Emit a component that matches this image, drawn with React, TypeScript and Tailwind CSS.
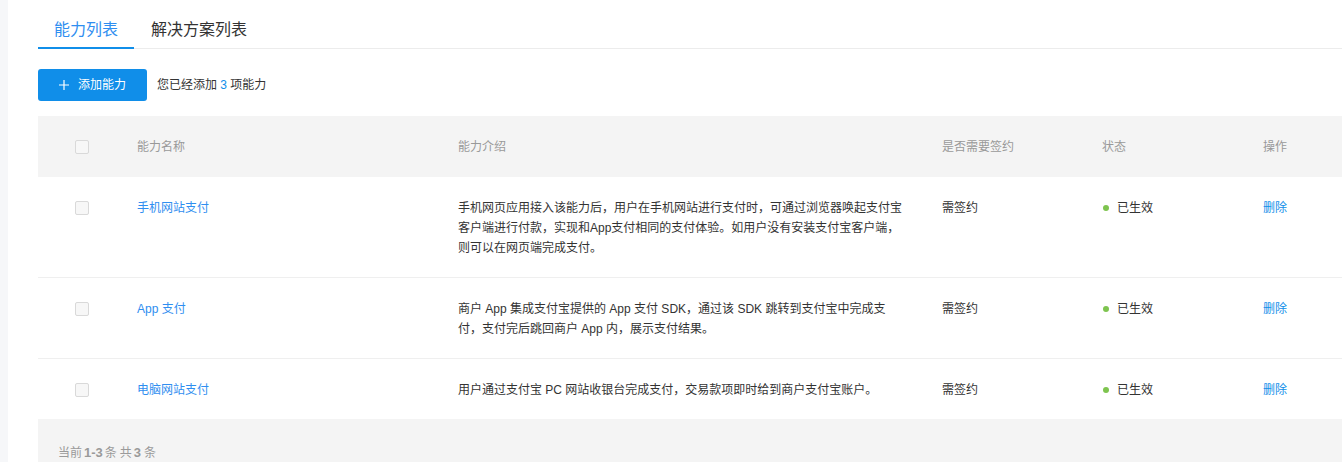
const rows = [
  {
    name: "手机网站支付",
    desc: "手机网页应用接入该能力后，用户在手机网站进行支付时，可通过浏览器唤起支付宝客户端进行付款，实现和App支付相同的支付体验。如用户没有安装支付宝客户端，则可以在网页端完成支付。",
  },
  {
    name: "App 支付",
    desc: "商户 App 集成支付宝提供的 App 支付 SDK，通过该 SDK 跳转到支付宝中完成支付，支付完后跳回商户 App 内，展示支付结果。",
  },
  {
    name: "电脑网站支付",
    desc: "用户通过支付宝 PC 网站收银台完成支付，交易款项即时给到商户支付宝账户。",
  },
];

function Checkbox() {
  return <span className="block w-[14px] h-[14px] rounded-[2px] border border-[#d9d9d9] bg-[#f7f7f7]" />;
}

export default function App() {
  return (
    <div className="flex w-[1342px] h-[462px] overflow-hidden bg-white font-['Liberation_Sans','Noto_Sans_CJK_SC',sans-serif] text-[#333]">
      <div className="w-[8px] shrink-0 bg-[#f6f7f9]" />

      <div className="flex-1 pl-[30px] min-w-0">
        {/* tabs */}
        <div className="flex border-b border-[#ececec] h-[49px]">
          <div className="px-4 pt-[18px] pb-[4px] text-[16px] leading-[24px] text-[#2f8ef0] border-b-2 border-[#108ee9] h-[49px] box-border">
            能力列表
          </div>
          <div className="px-[17px] pt-[18px] pb-[4px] text-[16px] leading-[24px] text-[#333]">
            解决方案列表
          </div>
        </div>

        {/* toolbar */}
        <div className="flex items-center mt-[20px] gap-[10px]">
          <button className="h-8 w-[109px] rounded-[3px] bg-[#108ee9] text-white text-[12px] flex items-center justify-center gap-[9px]">
            <svg width="10" height="10" viewBox="0 0 10 10" fill="none">
              <path d="M5 0v10M0 5h10" stroke="white" strokeWidth="1.2" />
            </svg>
            <span>添加能力</span>
          </button>
          <span className="text-[12px] text-[#333]">
            您已经添加 <span className="text-[#108ee9]">3</span> 项能力
          </span>
        </div>

        {/* table */}
        <div className="mt-[15px] text-[12px]">
          <div className="grid grid-cols-[99px_321px_484px_160px_161px_1fr] h-[61px] items-center bg-[#f4f4f4] text-[#999]">
            <div className="pl-[37px]"><Checkbox /></div>
            <div>能力名称</div>
            <div>能力介绍</div>
            <div>是否需要签约</div>
            <div>状态</div>
            <div>操作</div>
          </div>

          {rows.map((r, i) => (
            <div
              key={r.name}
              className={
                "grid grid-cols-[99px_321px_484px_160px_161px_1fr] pt-[21px] pb-[19px] leading-[20px] " +
                (i < rows.length - 1 ? "border-b border-[#efefef]" : "")
              }
            >
              <div className="pl-[37px] pt-[3px]"><Checkbox /></div>
              <div className="text-[#2f8ef0]">{r.name}</div>
              <div className="pr-[39px]">{r.desc}</div>
              <div>需签约</div>
              <div className="flex items-start">
                <span className="mt-[7px] ml-[1px] mr-[8px] w-[6px] h-[6px] rounded-full bg-[#7ec44f]" />
                <span>已生效</span>
              </div>
              <div className="text-[#108ee9]">删除</div>
            </div>
          ))}

          <div className="bg-[#f4f4f4] h-[60px] pt-[26px] pl-[20px] text-[#9a9a9a] leading-[16px]">
            当前<b className="font-bold text-[13px] mx-[2px]">1-3</b>条<span className="ml-[3px]">共</span>
            <b className="font-bold text-[13px] mx-[2px]">3</b>
            <span className="ml-[1px]">条</span>
          </div>
        </div>
      </div>
    </div>
  );
}
